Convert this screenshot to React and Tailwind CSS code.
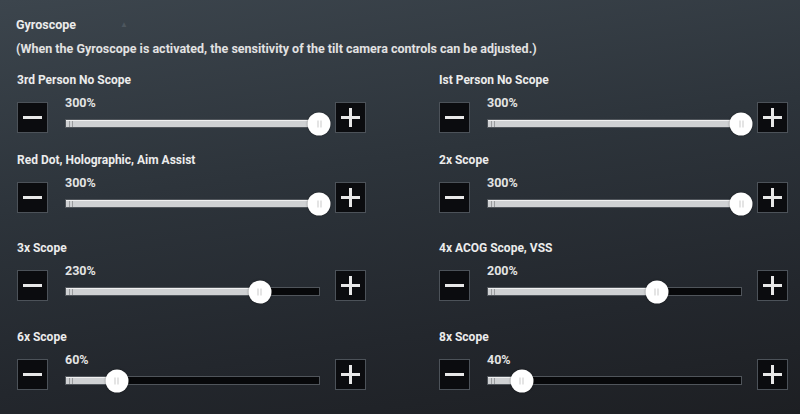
import React from "react";

// Gyroscope sensitivity panel

const rows = [
  {
    gap: "mt-0",
    left: { label: "3rd Person No Scope", value: 300 },
    right: { label: "Ist Person No Scope", value: 300 },
  },
  {
    gap: "mt-[17px]",
    left: { label: "Red Dot, Holographic, Aim Assist", value: 300 },
    right: { label: "2x Scope", value: 300 },
  },
  {
    gap: "mt-[25px]",
    left: { label: "3x Scope", value: 230 },
    right: { label: "4x ACOG Scope, VSS", value: 200 },
  },
  {
    gap: "mt-[26px]",
    left: { label: "6x Scope", value: 60 },
    right: { label: "8x Scope", value: 40 },
  },
];

const MAX = 300;

const SquareButton = ({ plus }) => (
  <div className="mt-[7px] w-[31px] h-[31px] shrink-0 bg-[#0b0c0f] border border-[#4c5259] flex items-center justify-center">
    <svg width="21" height="21" viewBox="0 0 21 21">
      <rect x="1" y="9" width="19" height="3" fill="#e8e8e8" />
      {plus && <rect x="9" y="1" width="3" height="19" fill="#e8e8e8" />}
    </svg>
  </div>
);

const Slider = ({ value }) => {
  const pct = (value / MAX) * 100;
  return (
    <div className="flex flex-col w-[255px] shrink-0">
      <span className="h-[16px] leading-[16px] text-[12.5px] text-[#e4e4e4]">
        {value}%
      </span>
      <div className="relative mt-[8px] h-[9px] w-full bg-[#07080a] border border-[#50555b]">
        <div
          className="absolute left-0 top-0 bottom-0 bg-[#cfd1d3] border-t border-[#f0f0f0]"
          style={{ width: `${pct}%` }}
        >
          <div className="absolute left-[3px] top-0 bottom-0 w-[1px] bg-[#9a9c9e]" />
          <div className="absolute left-[6px] top-0 bottom-0 w-[1px] bg-[#9a9c9e]" />
        </div>
        <div
          className="absolute top-1/2 w-[23px] h-[23px] -translate-x-1/2 -translate-y-1/2 rounded-full bg-white flex items-center justify-center gap-[2px] shadow-[0_0_2px_rgba(0,0,0,0.5)]"
          style={{ left: `${pct}%` }}
        >
          <span className="w-[1px] h-[7px] bg-[#cacaca]" />
          <span className="w-[1px] h-[7px] bg-[#cacaca]" />
        </div>
      </div>
    </div>
  );
};

const Setting = ({ label, value }) => (
  <div className="flex flex-col">
    <div className="h-[16px] leading-[16px] text-[12px] text-[#ececec] whitespace-nowrap">
      {label}
    </div>
    <div className="mt-[7px] flex flex-row items-start h-[40px]">
      <SquareButton />
      <div className="ml-[17px]">
        <Slider value={value} />
      </div>
      <div className="ml-[15px]">
        <SquareButton plus />
      </div>
    </div>
  </div>
);

export default function App() {
  return (
    <div
      className="w-[800px] h-[414px] overflow-hidden bg-[linear-gradient(172deg,#3c454d_0%,#2d343b_40%,#23272d_75%,#1d1f23_100%)] px-[16px] pt-[17px] font-bold"
      style={{ fontFamily: 'Roboto, "Liberation Sans", sans-serif' }}
    >
      <div className="h-[16px] leading-[16px] text-[12.5px] text-[#ececec] flex items-center">
        Gyroscope
        <span className="ml-[44px] text-[8px] text-[#4d565e]">▲</span>
      </div>
      <div className="mt-[8px] h-[16px] leading-[16px] text-[12.5px] text-[#e2e2e2] whitespace-nowrap">
        (When the Gyroscope is activated, the sensitivity of the tilt camera controls can be adjusted.)
      </div>
      <div className="mt-[15px] flex flex-col">
        {rows.map((row, i) => (
          <div key={i} className={`${row.gap} grid grid-cols-[349px_349px] gap-x-[73px] pl-[1px]`}>
            <Setting {...row.left} />
            <Setting {...row.right} />
          </div>
        ))}
      </div>
    </div>
  );
}
